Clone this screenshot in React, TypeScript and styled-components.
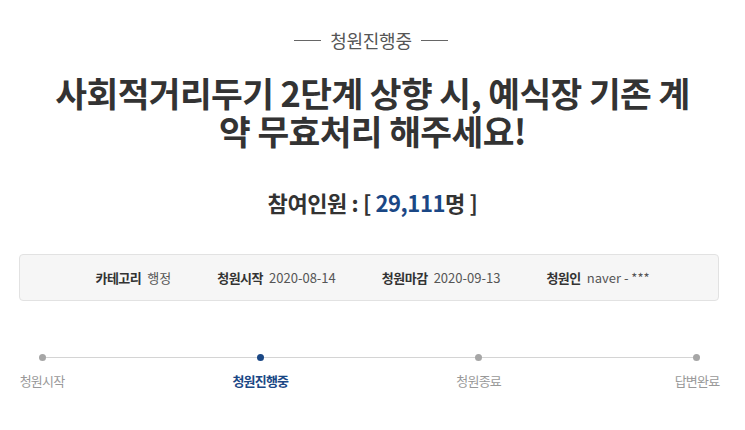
import React from 'react';
import styled, { createGlobalStyle } from 'styled-components';

const GlobalStyle = createGlobalStyle`
  html, body {
    margin: 0;
    padding: 0;
    background: #fff;
  }
  body {
    font-family: 'Noto Sans CJK KR', 'Noto Sans', sans-serif;
    color: #333;
  }
`;

const Page = styled.div`
  width: 745px;
  height: 430px;
  overflow: hidden;
  display: flex;
  flex-direction: column;
  align-items: center;
  padding-top: 27px;
  box-sizing: border-box;
`;

const Status = styled.div`
  display: flex;
  align-items: center;
  gap: 9px;
  font-size: 18px;
  line-height: 26px;
  color: #555;
  letter-spacing: -0.3px;
  margin-right: 3px;

  &::before,
  &::after {
    content: '';
    width: 27px;
    height: 1px;
    background: #666;
  }
`;

const Title = styled.h1`
  margin: 20px 0 0;
  width: 650px;
  text-align: center;
  font-size: 34.5px;
  line-height: 38px;
  font-weight: 700;
  color: #333;
  letter-spacing: -0.6px;
`;

const Count = styled.div`
  margin-top: 38px;
  font-size: 22px;
  line-height: 30px;
  font-weight: 700;
  color: #333;
  letter-spacing: -0.4px;
`;

const CountNumber = styled.span`
  color: #1a4785;
`;

const InfoBox = styled.div`
  margin: 37px 8px 0 0;
  width: 700px;
  height: 47px;
  box-sizing: border-box;
  background: #f6f6f6;
  border: 1px solid #e2e2e2;
  border-radius: 4px;
  display: flex;
  justify-content: center;
  align-items: center;
  gap: 46px;
  padding-left: 8px;
`;

const InfoItem = styled.div`
  display: flex;
  align-items: baseline;
  gap: 6px;
  font-size: 13px;
  letter-spacing: -0.5px;
`;

const InfoLabel = styled.span`
  font-weight: 700;
  color: #333;
`;

const InfoValue = styled.span`
  color: #555;
  letter-spacing: 0;
`;

const Steps = styled.ol`
  position: relative;
  list-style: none;
  margin: 52px 6px 0 0;
  padding: 0;
  width: 717px;
  display: flex;
  justify-content: space-between;

  &::before {
    content: '';
    position: absolute;
    top: 4px;
    left: 31px;
    right: 31px;
    height: 1px;
    background: #d4d4d4;
  }
`;

const Step = styled.li`
  position: relative;
  width: 62px;
  display: flex;
  flex-direction: column;
  align-items: center;
  gap: 11px;
`;

const Dot = styled.span<{ $active?: boolean }>`
  width: 7px;
  height: 7px;
  border-radius: 50%;
  margin-top: 1px;
  background: ${({ $active }) => ($active ? '#1a4785' : '#a6a6a6')};
`;

const StepLabel = styled.span<{ $active?: boolean }>`
  white-space: nowrap;
  font-size: 13px;
  line-height: 18px;
  letter-spacing: -0.8px;
  font-weight: ${({ $active }) => ($active ? 700 : 400)};
  color: ${({ $active }) => ($active ? '#1a4785' : '#999')};
`;

const info = [
  { label: '카테고리', value: '행정' },
  { label: '청원시작', value: '2020-08-14' },
  { label: '청원마감', value: '2020-09-13' },
  { label: '청원인', value: 'naver - ***' },
];

const steps = ['청원시작', '청원진행중', '청원종료', '답변완료'];

export default function App() {
  return (
    <>
      <GlobalStyle />
      <Page>
        <Status>청원진행중</Status>
        <Title>사회적거리두기 2단계 상향 시, 예식장 기존 계약 무효처리 해주세요!</Title>
        <Count>
          참여인원 : [ <CountNumber>29,111</CountNumber>명 ]
        </Count>
        <InfoBox>
          {info.map(item => (
            <InfoItem key={item.label}>
              <InfoLabel>{item.label}</InfoLabel>
              <InfoValue>{item.value}</InfoValue>
            </InfoItem>
          ))}
        </InfoBox>
        <Steps>
          {steps.map((step, index) => (
            <Step key={step}>
              <Dot $active={index === 1} />
              <StepLabel $active={index === 1}>{step}</StepLabel>
            </Step>
          ))}
        </Steps>
      </Page>
    </>
  );
}
